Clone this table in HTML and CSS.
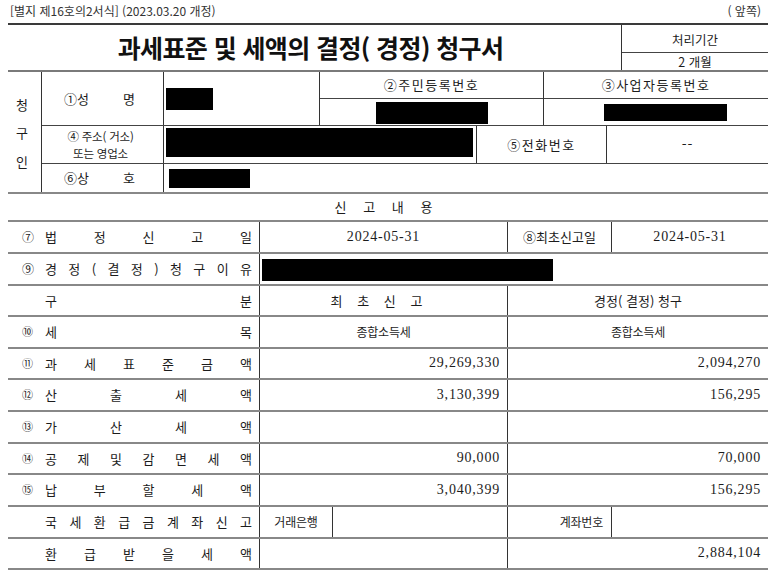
FILE: index.html
```html
<!DOCTYPE html>
<html lang="ko">
<head>
<meta charset="utf-8">
<title>과세표준 및 세액의 결정(경정) 청구서</title>
<link rel="stylesheet" href="styles.css">
</head>
<body>
<div class="page">
  <div class="meta">
    <span>[별지 제16호의2서식] (2023.03.20 개정)</span>
    <span>( 앞쪽)</span>
  </div>

  <div class="head">
    <h1 class="title">과세표준 및 세액의 결정( 경정) 청구서</h1>
    <div class="period">
      <div class="period-label">처리기간</div>
      <div class="period-value">2 개월</div>
    </div>
  </div>

  <div class="applicant">
    <div class="side"><span>청</span><span>구</span><span>인</span></div>
    <div class="app-rows">
      <div class="app-row r1">
        <div class="cell lbl"><span class="pair"><span>①성</span><span>명</span></span></div>
        <div class="cell val"><span class="redact name"></span></div>
        <div class="cell split">
          <div class="split-top wide">②주민등록번호</div>
          <div class="split-bot"><span class="redact rrn"></span></div>
        </div>
        <div class="cell split">
          <div class="split-top wide">③사업자등록번호</div>
          <div class="split-bot"><span class="redact biz"></span></div>
        </div>
      </div>
      <div class="app-row r2">
        <div class="cell lbl addr"><span class="addr-text"><span class="addr-line">④ 주소( 거소)</span><span class="addr-line">또는 영업소</span></span></div>
        <div class="cell val"><span class="redact addr-box"></span></div>
        <div class="cell center wide">⑤전화번호</div>
        <div class="cell center dash">--</div>
      </div>
      <div class="app-row r3">
        <div class="cell lbl"><span class="pair"><span>⑥상</span><span>호</span></span></div>
        <div class="cell val"><span class="redact trade"></span></div>
      </div>
    </div>
  </div>

  <div class="report">
    <div class="row caption h28"><div class="cell center spaced">신 고 내 용</div></div>

    <div class="row cols-date h32">
      <div class="cell label"><span class="num">⑦</span><span class="spread"><span>법</span><span>정</span><span>신</span><span>고</span><span>일</span></span></div>
      <div class="cell center digits">2024-05-31</div>
      <div class="cell center">⑧최초신고일</div>
      <div class="cell center digits">2024-05-31</div>
    </div>

    <div class="row cols-two h32">
      <div class="cell label"><span class="num">⑨</span><span class="spread"><span>경</span><span>정</span><span>(</span><span>결</span><span>정</span><span>)</span><span>청</span><span>구</span><span>이</span><span>유</span></span></div>
      <div class="cell val"><span class="redact reason"></span></div>
    </div>

    <div class="row cols-three h31">
      <div class="cell label"><span class="num"></span><span class="spread"><span>구</span><span>분</span></span></div>
      <div class="cell center spaced2">최 초 신 고</div>
      <div class="cell center">경정( 결정) 청구</div>
    </div>

    <div class="row cols-three h32">
      <div class="cell label"><span class="num sm">⑩</span><span class="spread"><span>세</span><span>목</span></span></div>
      <div class="cell center small">종합소득세</div>
      <div class="cell center small">종합소득세</div>
    </div>

    <div class="row cols-three h31">
      <div class="cell label"><span class="num sm">⑪</span><span class="spread"><span>과</span><span>세</span><span>표</span><span>준</span><span>금</span><span>액</span></span></div>
      <div class="cell amount">29,269,330</div>
      <div class="cell amount">2,094,270</div>
    </div>

    <div class="row cols-three h32">
      <div class="cell label"><span class="num sm">⑫</span><span class="spread"><span>산</span><span>출</span><span>세</span><span>액</span></span></div>
      <div class="cell amount">3,130,399</div>
      <div class="cell amount">156,295</div>
    </div>

    <div class="row cols-three h32">
      <div class="cell label"><span class="num sm">⑬</span><span class="spread"><span>가</span><span>산</span><span>세</span><span>액</span></span></div>
      <div class="cell amount"></div>
      <div class="cell amount"></div>
    </div>

    <div class="row cols-three h31">
      <div class="cell label"><span class="num sm">⑭</span><span class="spread"><span>공</span><span>제</span><span>및</span><span>감</span><span>면</span><span>세</span><span>액</span></span></div>
      <div class="cell amount">90,000</div>
      <div class="cell amount">70,000</div>
    </div>

    <div class="row cols-three h32">
      <div class="cell label"><span class="num sm">⑮</span><span class="spread"><span>납</span><span>부</span><span>할</span><span>세</span><span>액</span></span></div>
      <div class="cell amount">3,040,399</div>
      <div class="cell amount">156,295</div>
    </div>

    <div class="row cols-bank h32">
      <div class="cell label"><span class="num"></span><span class="spread"><span>국</span><span>세</span><span>환</span><span>급</span><span>금</span><span>계</span><span>좌</span><span>신</span><span>고</span></span></div>
      <div class="cell center small">거래은행</div>
      <div class="cell"></div>
      <div class="cell right small">계좌번호</div>
      <div class="cell"></div>
    </div>

    <div class="row cols-three h31">
      <div class="cell label"><span class="num"></span><span class="spread"><span>환</span><span>급</span><span>받</span><span>을</span><span>세</span><span>액</span></span></div>
      <div class="cell amount"></div>
      <div class="cell amount">2,884,104</div>
    </div>
  </div>
</div>
</body>
</html>
```

FILE: styles.css
```css
* {
  box-sizing: border-box;
  margin: 0;
  padding: 0;
}

body {
  margin: 0;
  background: #ffffff;
  color: #1c1c1c;
  font-family: "Noto Sans CJK KR", "Noto Sans", sans-serif;
  font-size: 13px;
  line-height: 1.2;
}

.page {
  width: 760px;
  margin-left: 8px;
}

/* top meta line */
.meta {
  height: 25px;
  display: flex;
  justify-content: space-between;
  align-items: center;
  padding: 2px 7px 2px 2px;
  font-size: 12px;
  color: #333;
  border-bottom: 2px solid #3a3a3a;
}

/* title row */
.head {
  height: 47px;
  display: grid;
  grid-template-columns: 613px 147px;
  border-bottom: 2px solid #7a7a7a;
}

.title {
  display: flex;
  align-items: center;
  justify-content: center;
  font-size: 25px;
  font-weight: 700;
  letter-spacing: -0.6px;
  color: #111;
  padding-bottom: 1px;
  padding-right: 8px;
}

.period {
  border-left: 1px solid #333;
  display: flex;
  flex-direction: column;
  font-size: 12.5px;
}

.period-label {
  height: 28px;
  border-bottom: 1px solid #444;
  display: flex;
  align-items: center;
  justify-content: center;
  padding-top: 2px;
}

.period-value {
  flex: 1;
  display: flex;
  align-items: center;
  justify-content: center;
}

/* applicant section */
.applicant {
  display: grid;
  grid-template-columns: 34px 726px;
  height: 122px;
  border-bottom: 2px solid #888;
}

.side {
  border-right: 1px solid #333;
  display: flex;
  flex-direction: column;
  align-items: center;
  justify-content: center;
  gap: 13px;
  padding-right: 5px;
  padding-top: 2px;
}

.app-row {
  display: grid;
}

.app-row > .cell + .cell {
  border-left: 1px solid #333;
}

.r1 {
  height: 54px;
  grid-template-columns: 121px 156px 224px 225px;
  border-bottom: 1px solid #444;
}

.r2 {
  height: 38px;
  grid-template-columns: 121px 313px 130px 162px;
  border-bottom: 1px solid #444;
}

.r3 {
  height: 28px;
  grid-template-columns: 121px 605px;
}

.cell {
  display: flex;
  align-items: center;
  min-width: 0;
}

.lbl {
  padding-left: 22px;
}

.pair {
  width: 71px;
  display: flex;
  justify-content: space-between;
}

.addr {
  justify-content: center;
  padding-left: 0;
  padding-right: 4px;
}

.addr-text {
  display: flex;
  flex-direction: column;
  align-items: center;
  font-size: 11.5px;
  letter-spacing: -0.2px;
}

.addr-line {
  display: block;
  height: 17px;
  line-height: 17px;
}

.val {
  padding-left: 2px;
}

.split {
  flex-direction: column;
  align-items: stretch;
}

.split-top {
  height: 27px;
  border-bottom: 1px solid #444;
  display: flex;
  align-items: center;
  justify-content: center;
}

.split-bot {
  flex: 1;
  display: flex;
  align-items: center;
  justify-content: center;
}

.wide {
  letter-spacing: 1.5px;
}

.dash {
  font-size: 14px;
  letter-spacing: 1px;
}

.center {
  justify-content: center;
}

.right {
  justify-content: flex-end;
  padding-right: 8px;
}

.small {
  font-size: 12px;
  letter-spacing: -0.2px;
}

/* redaction blocks */
.redact {
  display: block;
  background: #000;
}

.name {
  width: 47px;
  height: 22px;
  margin-top: 1px;
}

.rrn {
  width: 112px;
  height: 22px;
  margin-top: 2px;
}

.biz {
  width: 123px;
  height: 17px;
  margin-left: 18px;
  margin-top: 1px;
}

.addr-box {
  width: 307px;
  height: 29px;
  margin-top: -5px;
}

.trade {
  width: 81px;
  height: 19px;
  margin-left: 3px;
  margin-top: 1px;
}

.reason {
  width: 291px;
  height: 22px;
  margin-top: 1px;
}

/* report table */
.row {
  display: grid;
  border-bottom: 2px solid #888;
}

.row > .cell + .cell {
  border-left: 1px solid #333;
}

.h28 { height: 28px; }
.h31 { height: 31px; }
.h32 { height: 32px; }

.caption {
  grid-template-columns: 760px;
}

.spaced {
  word-spacing: 3px;
  letter-spacing: 5px;
  padding-right: 4px;
}

.spaced2 {
  word-spacing: 3px;
  letter-spacing: 4px;
  padding-right: 10px;
}

.cols-date {
  grid-template-columns: 251px 248px 104px 157px;
}

.cols-two {
  grid-template-columns: 251px 509px;
}

.cols-three {
  grid-template-columns: 251px 248px 261px;
}

.cols-bank {
  grid-template-columns: 251px 73px 175px 104px 157px;
}

.label {
  padding-left: 14px;
  padding-right: 7px;
}

.num {
  width: 23px;
  flex: none;
  font-size: 12px;
}

.num.sm {
  font-size: 11px;
}

.spread {
  flex: 1;
  display: flex;
  justify-content: space-between;
}

.digits {
  font-family: "Liberation Serif", "DejaVu Serif", serif;
  font-size: 14px;
  letter-spacing: 0.8px;
}

.amount {
  justify-content: flex-end;
  padding-right: 7px;
  font-family: "Liberation Serif", "DejaVu Serif", serif;
  font-size: 14px;
  letter-spacing: 0.8px;
}
```
